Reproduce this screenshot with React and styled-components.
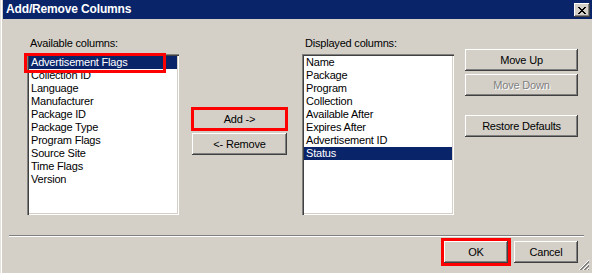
import React from "react";
import styled, { createGlobalStyle, css } from "styled-components";

const Global = createGlobalStyle`
  html, body { margin: 0; padding: 0; background: #d4d0c8; }
  body { font-family: "Liberation Sans", Arial, sans-serif; }
`;

const Window = styled.div`
  position: relative;
  width: 592px;
  height: 273px;
  box-sizing: border-box;
  background: #d4d0c8;
  display: flex;
  flex-direction: column;
  box-shadow: inset 1px 0 #e6e3dd, inset 2px 0 #ffffff;
  font-family: "Liberation Sans", Arial, sans-serif;
  font-size: 11px;
  letter-spacing: -0.2px;
  color: #000;
  overflow: hidden;
`;

const TitleBar = styled.div`
  height: 19px;
  margin-left: 3px;
  background: #0a246a;
  display: flex;
  align-items: center;
  justify-content: space-between;
  padding: 0 2px 0 3px;
`;

const Title = styled.span`
  color: #fff;
  font-weight: bold;
  font-size: 12px;
  letter-spacing: -0.15px;
  line-height: 19px;
`;

const raised = css`
  background: #d4d0c8;
  border: none;
  box-shadow: inset -1px -1px #404040, inset 1px 1px #ffffff,
    inset -2px -2px #808080, inset 2px 2px #d4d0c8;
`;

const CloseBtn = styled.div`
  ${raised};
  width: 16px;
  height: 14px;
  display: flex;
  align-items: center;
  justify-content: center;
  margin-top: 1px;
`;

const Body = styled.div`
  display: flex;
  align-items: flex-start;
  padding: 18px 0 0 27px;
`;

const Column = styled.div`
  display: flex;
  flex-direction: column;
  width: ${(p) => p.$width}px;
  margin-left: ${(p) => p.$ml || 0}px;
  padding-top: ${(p) => p.$pt || 0}px;
`;

const Label = styled.div`
  height: 13px;
  line-height: 13px;
  padding-left: 3px;
  margin-bottom: 4px;
  white-space: nowrap;
`;

const ListWrap = styled.div`
  position: relative;
`;

const ListBox = styled.div`
  height: 161px;
  box-sizing: border-box;
  background: #fff;
  padding: 2px;
  box-shadow: inset 1px 1px #808080, inset 2px 2px #404040,
    inset -1px -1px #ffffff, inset -2px -2px #d4d0c8;
  overflow: hidden;
`;

const Item = styled.div`
  height: 13px;
  line-height: 13px;
  padding-left: 2px;
  white-space: nowrap;
  background: ${(p) => (p.$selected ? "#0a246a" : "transparent")};
  color: ${(p) => (p.$selected ? "#fff" : "#000")};
`;

const Callout = styled.div`
  position: absolute;
  left: -3px;
  top: -1px;
  width: 142px;
  height: 20px;
  box-sizing: border-box;
  border: 3px solid #ff0000;
  pointer-events: none;
`;

const Button = styled.button`
  ${raised};
  font-family: inherit;
  font-size: 11px;
  letter-spacing: -0.2px;
  height: ${(p) => p.$h || 22}px;
  width: ${(p) => (p.$w ? `${p.$w}px` : "100%")};
  margin-top: ${(p) => p.$mt || 0}px;
  padding: 0;
  color: ${(p) => (p.disabled ? "#808080" : "#000")};
  text-shadow: ${(p) => (p.disabled ? "1px 1px 0 #ffffff" : "none")};
  outline: ${(p) => (p.$marked ? "3px solid #ff0000" : "none")};
  outline-offset: ${(p) => p.$offset || 0}px;
  cursor: default;
`;

const Separator = styled.div`
  margin: 20px 8px 0 9px;
  border-top: 1px solid #808080;
  border-bottom: 1px solid #ffffff;
`;

const Footer = styled.div`
  display: flex;
  justify-content: flex-end;
  gap: 6px;
  padding: 4px 14px 0 0;
`;

const Grip = styled.svg`
  position: absolute;
  right: 2px;
  bottom: 2px;
`;

const available = [
  "Advertisement Flags",
  "Collection ID",
  "Language",
  "Manufacturer",
  "Package ID",
  "Package Type",
  "Program Flags",
  "Source Site",
  "Time Flags",
  "Version",
];

const displayed = [
  "Name",
  "Package",
  "Program",
  "Collection",
  "Available After",
  "Expires After",
  "Advertisement ID",
  "Status",
];

export default function App() {
  return (
    <>
      <Global />
      <Window>
        <TitleBar>
          <Title>Add/Remove Columns</Title>
          <CloseBtn>
            <svg width="8" height="7" viewBox="0 0 8 7" shapeRendering="crispEdges">
              <path
                d="M0 0h2v1h-2zM6 0h2v1h-2zM1 1h2v1h-2zM5 1h2v1h-2zM2 2h4v1h-4zM3 3h2v1h-2zM2 4h4v1h-4zM1 5h2v1h-2zM5 5h2v1h-2zM0 6h2v1h-2zM6 6h2v1h-2z"
                fill="#000"
              />
            </svg>
          </CloseBtn>
        </TitleBar>
        <Body>
          <Column $width={152}>
            <Label>Available columns:</Label>
            <ListWrap>
              <ListBox>
                {available.map((t, i) => (
                  <Item key={t} $selected={i === 0}>
                    {t}
                  </Item>
                ))}
              </ListBox>
              <Callout />
            </ListWrap>
          </Column>
          <Column $width={95} $ml={13} $pt={71}>
            <Button $marked $offset={-2}>Add -&gt;</Button>
            <Button $mt={3}>&lt;- Remove</Button>
          </Column>
          <Column $width={152} $ml={15}>
            <Label>Displayed columns:</Label>
            <ListBox>
              {displayed.map((t, i) => (
                <Item key={t} $selected={i === displayed.length - 1}>
                  {t}
                </Item>
              ))}
            </ListBox>
          </Column>
          <Column $width={113} $ml={11} $pt={12}>
            <Button>Move Up</Button>
            <Button $mt={3} disabled>
              Move Down
            </Button>
            <Button $mt={19}>Restore Defaults</Button>
          </Column>
        </Body>
        <Separator />
        <Footer>
          <Button $w={64} $marked>OK</Button>
          <Button $w={64}>Cancel</Button>
        </Footer>
        <Grip width="12" height="12" viewBox="0 0 12 12" shapeRendering="crispEdges">
          {[0, 4, 8].map((o) => (
            <g key={o}>
              <line x1={11} y1={o + 1} x2={o + 1} y2={11} stroke="#ffffff" />
              <line x1={11} y1={o + 2} x2={o + 2} y2={11} stroke="#808080" />
              <line x1={11} y1={o + 3} x2={o + 3} y2={11} stroke="#808080" />
            </g>
          ))}
        </Grip>
      </Window>
    </>
  );
}
